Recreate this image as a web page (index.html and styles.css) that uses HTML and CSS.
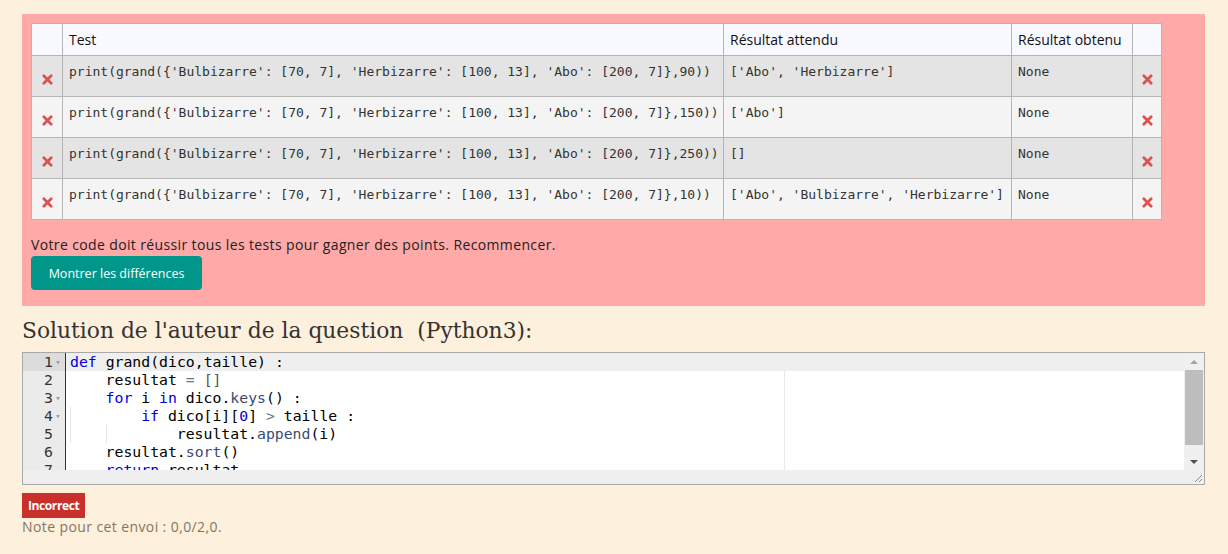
FILE: index.html
```html
<!DOCTYPE html>
<html lang="fr">
<head>
<meta charset="utf-8">
<link rel="stylesheet" href="styles.css">
</head>
<body>
<div class="page">
  <div class="result-panel">
    <table class="tests">
      <colgroup>
        <col class="c-icon"><col class="c-test"><col class="c-exp"><col class="c-got"><col class="c-icon2">
      </colgroup>
      <thead>
        <tr><th></th><th>Test</th><th>Résultat attendu</th><th>Résultat obtenu</th><th></th></tr>
      </thead>
      <tbody>
        <tr class="odd">
          <td class="icon"><svg class="cross" viewBox="0 0 12 12"><path d="M2 2L10 10M10 2L2 10"/></svg></td>
          <td class="code">print(grand({'Bulbizarre': [70, 7], 'Herbizarre': [100, 13], 'Abo': [200, 7]},90))</td>
          <td class="code">['Abo', 'Herbizarre']</td>
          <td class="code">None</td>
          <td class="icon"><svg class="cross" viewBox="0 0 12 12"><path d="M2 2L10 10M10 2L2 10"/></svg></td>
        </tr>
        <tr class="even">
          <td class="icon"><svg class="cross" viewBox="0 0 12 12"><path d="M2 2L10 10M10 2L2 10"/></svg></td>
          <td class="code">print(grand({'Bulbizarre': [70, 7], 'Herbizarre': [100, 13], 'Abo': [200, 7]},150))</td>
          <td class="code">['Abo']</td>
          <td class="code">None</td>
          <td class="icon"><svg class="cross" viewBox="0 0 12 12"><path d="M2 2L10 10M10 2L2 10"/></svg></td>
        </tr>
        <tr class="odd">
          <td class="icon"><svg class="cross" viewBox="0 0 12 12"><path d="M2 2L10 10M10 2L2 10"/></svg></td>
          <td class="code">print(grand({'Bulbizarre': [70, 7], 'Herbizarre': [100, 13], 'Abo': [200, 7]},250))</td>
          <td class="code">[]</td>
          <td class="code">None</td>
          <td class="icon"><svg class="cross" viewBox="0 0 12 12"><path d="M2 2L10 10M10 2L2 10"/></svg></td>
        </tr>
        <tr class="even">
          <td class="icon"><svg class="cross" viewBox="0 0 12 12"><path d="M2 2L10 10M10 2L2 10"/></svg></td>
          <td class="code">print(grand({'Bulbizarre': [70, 7], 'Herbizarre': [100, 13], 'Abo': [200, 7]},10))</td>
          <td class="code">['Abo', 'Bulbizarre', 'Herbizarre']</td>
          <td class="code">None</td>
          <td class="icon"><svg class="cross" viewBox="0 0 12 12"><path d="M2 2L10 10M10 2L2 10"/></svg></td>
        </tr>
      </tbody>
    </table>
    <p class="msg">Votre code doit réussir tous les tests pour gagner des points. Recommencer.</p>
    <button class="diff-btn">Montrer les différences</button>
  </div>

  <h3 class="sol-title">Solution de l'auteur de la question &nbsp;(Python3):</h3>

  <div class="editor">
    <div class="editor-main">
      <div class="gutter">
        <div class="gl active">1<span class="fold">▾</span></div>
        <div class="gl">2<span class="fold"></span></div>
        <div class="gl">3<span class="fold">▾</span></div>
        <div class="gl">4<span class="fold">▾</span></div>
        <div class="gl">5<span class="fold"></span></div>
        <div class="gl">6<span class="fold"></span></div>
        <div class="gl">7<span class="fold"></span></div>
      </div>
      <div class="content">
        <div class="print-margin"></div>
        <div class="ln active"><span class="kw">def</span> grand(dico,taille) :</div>
        <div class="ln"><span class="ind"></span>resultat <span class="op">=</span> <span class="br">[]</span></div>
        <div class="ln"><span class="ind"></span><span class="kw">for</span> i <span class="kw">in</span> dico.<span class="fn">keys</span>() :</div>
        <div class="ln"><span class="ind g"></span><span class="ind"></span><span class="kw">if</span> dico[i][<span class="num">0</span>] <span class="op">&gt;</span> taille :</div>
        <div class="ln"><span class="ind g"></span><span class="ind g"></span><span class="ind"></span>resultat.<span class="fn">append</span>(i)</div>
        <div class="ln"><span class="ind"></span>resultat.<span class="fn">sort</span>()</div>
        <div class="ln"><span class="ind"></span><span class="kw">return</span> resultat</div>
      </div>
      <div class="vscroll">
        <div class="arrow up"></div>
        <div class="track"><div class="thumb"></div></div>
        <div class="arrow down"></div>
      </div>
    </div>
    <div class="editor-foot"><svg class="grip" viewBox="0 0 10 10"><path d="M9 2L2 9M9 6L6 9"/></svg></div>
  </div>

  <div class="badge">Incorrect</div>
  <div class="note">Note pour cet envoi : 0,0/2,0.</div>
</div>
</body>
</html>
```

FILE: styles.css
```css
html, body {
  margin: 0;
  padding: 0;
  background: #fdf0dc;
}
body {
  font-family: "Open Sans", "DejaVu Sans", sans-serif;
  font-size: 14px;
  color: #222;
}
.page {
  padding: 14px 23px 0 22px;
}
.result-panel {
  background: #ffa9a9;
  padding: 9px 9px 16px 9px;
}
.tests {
  border-collapse: collapse;
  table-layout: fixed;
  width: 1130px;
}
.c-icon { width: 31px; }
.c-test { width: 661px; }
.c-exp { width: 288px; }
.c-got { width: 121px; }
.c-icon2 { width: 29px; }
.tests th, .tests td {
  border: 1px solid #b5b5b5;
  text-align: left;
  font-weight: normal;
}
.tests th {
  background: #f8f8ff;
  height: 31px;
  padding: 0 6px;
  font-size: 14px;
  color: #111;
  vertical-align: middle;
}
.tests td {
  height: 41px;
  padding: 0;
  box-sizing: border-box;
}
.tests tr.odd td { background: #e4e4e4; }
.tests tr.even td { background: #f4f4f4; }
.tests td.code {
  font-family: "DejaVu Sans Mono", monospace;
  font-size: 13px;
  color: #333;
  vertical-align: top;
  padding: 7px 6px 0 6px;
  line-height: 18px;
  white-space: nowrap;
  overflow: hidden;
}
.tests td.icon {
  text-align: center;
  vertical-align: middle;
  padding-top: 6px;
}
.cross {
  width: 11px;
  height: 11px;
  display: inline-block;
}
.cross path {
  stroke: #d9534f;
  stroke-width: 3;
  stroke-linecap: round;
  fill: none;
}
.msg {
  margin: 16px 0 2px 0;
  color: #222;
  line-height: 18px;
  letter-spacing: 0.37px;
}
.diff-btn {
  background: #00968a;
  color: #fff;
  border: none;
  border-radius: 4px;
  width: 171px;
  height: 34px;
  font-family: "Open Sans", "DejaVu Sans", sans-serif;
  font-size: 12.5px;
  padding: 0;
}
.sol-title {
  font-family: "DejaVu Serif", serif;
  font-weight: normal;
  font-size: 21.8px;
  color: #333;
  margin: 12px 0 8px 0;
  line-height: 26px;
}
.editor {
  border: 1px solid #a9a9a9;
  background: #efefef;
  width: 1181px;
}
.editor-main {
  display: flex;
  height: 117px;
  overflow: hidden;
}
.gutter {
  width: 42px;
  background: #ebebeb;
  border-right: 1px solid #333;
  font-family: "DejaVu Sans Mono", monospace;
  font-size: 14.8px;
  color: #333;
  flex: none;
}
.gl {
  height: 18px;
  line-height: 18px;
  text-align: right;
  padding-right: 2px;
}
.gl.active { background: #dcdcdc; }
.fold {
  display: inline-block;
  width: 10px;
  font-size: 9px;
  color: #999;
  text-align: center;
  vertical-align: top;
}
.content {
  flex: 1;
  background: #fff;
  position: relative;
  font-family: "DejaVu Sans Mono", monospace;
  font-size: 14.8px;
  color: #000;
  padding-left: 4px;
}
.print-margin {
  position: absolute;
  left: 718px;
  top: 0;
  bottom: 0;
  width: 1px;
  background: #e8e8e8;
}
.ln {
  height: 18px;
  line-height: 18px;
  white-space: pre;
  position: relative;
}
.ln.active {
  background: #efefef;
  margin-left: -4px;
  padding-left: 4px;
}
.ind {
  display: inline-block;
  width: 35.6px;
  height: 18px;
  vertical-align: top;
}
.ind.g {
  box-shadow: inset 1px 0 0 #e6e6e6;
}
.kw { color: #0000e0; }
.fn { color: #3c4c72; }
.num { color: #0000cd; }
.op { color: #687687; }
.br { color: #555; }
.vscroll {
  width: 20px;
  flex: none;
  background: #f0f0f0;
  display: flex;
  flex-direction: column;
}
.arrow {
  height: 17px;
  display: flex;
  align-items: center;
  justify-content: center;
}
.arrow::before {
  content: "";
  border-left: 4px solid transparent;
  border-right: 4px solid transparent;
}
.arrow.up::before { border-bottom: 4px solid #a3a3a3; }
.arrow.down::before { border-top: 4px solid #505050; }
.track {
  flex: 1;
  padding: 0 1px;
}
.thumb {
  height: 75px;
  background: #bdbdbd;
}
.editor-foot {
  height: 14px;
  display: flex;
  justify-content: flex-end;
  align-items: flex-end;
}
.grip {
  width: 10px;
  height: 10px;
  margin: 0 1px 1px 0;
}
.grip path {
  stroke: #888;
  stroke-width: 1;
  fill: none;
}
.badge {
  display: inline-block;
  margin-top: 8px;
  background: #c9302c;
  color: #fff;
  font-weight: bold;
  font-size: 12px;
  height: 25px;
  line-height: 25px;
  padding: 0 6px;
  letter-spacing: -0.4px;
}
.note {
  color: #857565;
  font-size: 14px;
  line-height: 18px;
  letter-spacing: 0.4px;
}
```
